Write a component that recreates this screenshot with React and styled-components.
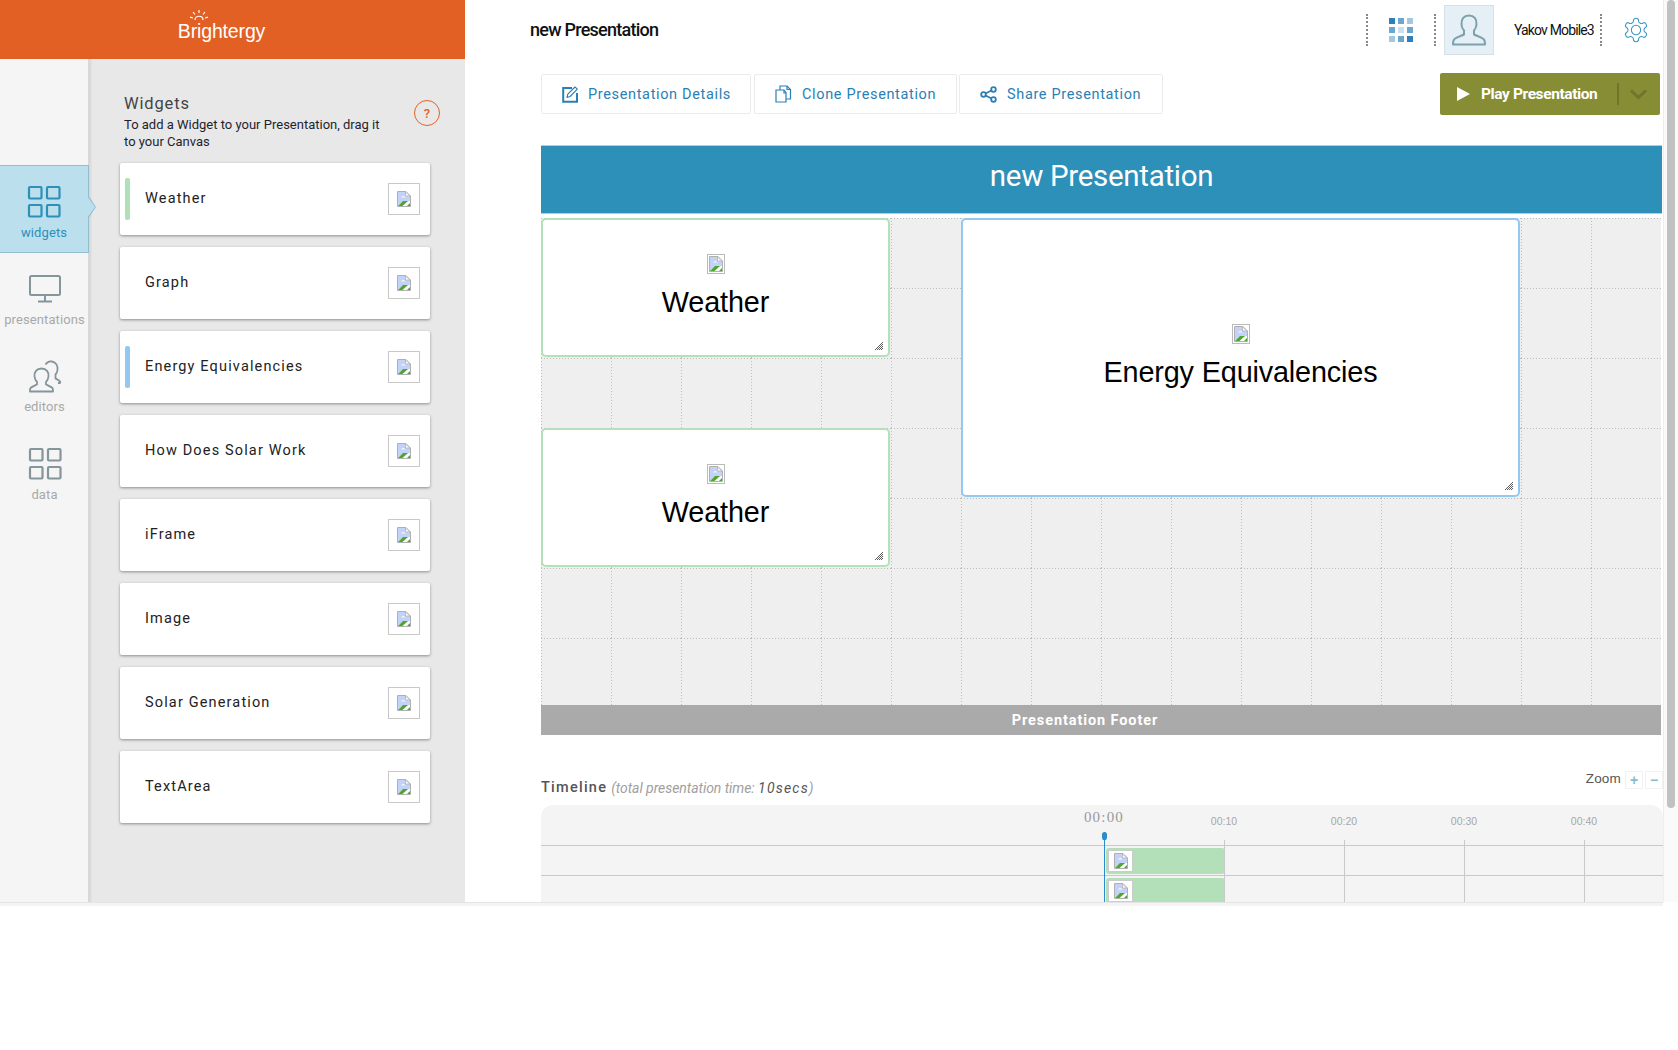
import React from 'react';
import styled, { createGlobalStyle } from 'styled-components';

const Global = createGlobalStyle`
  html, body { margin: 0; padding: 0; background: #fff; }
  * { box-sizing: border-box; }
  body { font-family: Roboto, "Liberation Sans", sans-serif; }
`;

const Page = styled.div`
  display: flex;
  width: 1678px;
  height: 902px;
  overflow: hidden;
`;
const BottomBand = styled.div`
  width: 1663px;
  height: 4px;
  background: #f4f4f4;
  border-top: 1px solid #e4e4e4;
`;

/* Sidebar */
const Sidebar = styled.aside`
  width: 465px;
  flex: none;
  display: flex;
  flex-direction: column;
`;
const Brand = styled.div`
  height: 59px;
  background: #e36025;
  display: flex;
  align-items: center;
  justify-content: center;
  padding-right: 22px;
  padding-top: 3px;
`;
const Logo = styled.span`
  position: relative;
  color: #fff;
  font: 400 19.5px/24px "Liberation Sans", sans-serif;
  letter-spacing: -0.15px;
`;
const LogoSun = styled.svg`
  position: absolute;
  left: 12px;
  top: -9px;
`;
const SideBody = styled.div`
  flex: 1;
  display: flex;
  min-height: 0;
`;
const Rail = styled.nav`
  width: 90px;
  flex: none;
  background: #f5f5f5;
  border-right: 2px solid #d8d8d8;
  box-shadow: 1px 0 2px rgba(0, 0, 0, 0.08);
  padding-top: 106px;
  position: relative;
`;
const RailItem = styled.div`
  position: relative;
  height: 87.6px;
  width: 89px;
  padding-top: 20px;
  display: flex;
  flex-direction: column;
  align-items: center;
  color: ${p => (p.$active ? '#2e90b8' : '#a9a9a9')};
  font-size: 13px;
  background: ${p => (p.$active ? '#bbdfed' : 'transparent')};
  border-top: ${p => (p.$active ? '1px solid #93bed1' : '0')};
  border-bottom: ${p => (p.$active ? '1px solid #93bed1' : '0')};
  border-right: ${p => (p.$active ? '1px solid #93bed1' : '0')};
  ${p => p.$active && `
    &::before {
      content: '';
      position: absolute;
      left: 88px;
      top: 29px;
      width: 8px;
      height: 24px;
      background: #93bed1;
      clip-path: polygon(0 0, 100% 50%, 0 100%);
    }
    &::after {
      content: '';
      position: absolute;
      left: 87px;
      top: 30px;
      width: 8px;
      height: 22px;
      background: #bbdfed;
      clip-path: polygon(0 0, 100% 50%, 0 100%);
    }
  `}
`;
const RailIcon = styled.div`
  height: 32px;
  display: flex;
  align-items: center;
  justify-content: center;
`;
const RailLabel = styled.span`
  margin-top: 6px;
  line-height: 18px;
  letter-spacing: 0.1px;
`;
const Panel = styled.div`
  flex: 1;
  background: #e8e8e8;
  padding: 35px 0 0 30px;
  min-width: 0;
`;
const PanelHead = styled.div`
  position: relative;
  padding-left: 4px;
  height: 69px;
`;
const PanelTitle = styled.h2`
  margin: 0;
  font-size: 16.5px;
  font-weight: 400;
  line-height: 20px;
  letter-spacing: 0.85px;
  color: #444;
`;
const PanelHint = styled.p`
  margin: 2px 0 0;
  width: 256px;
  font-size: 13px;
  line-height: 17px;
  color: #1f1f2e;
`;
const HelpBadge = styled.span`
  position: absolute;
  left: 294px;
  top: 6px;
  width: 26px;
  height: 26px;
  border: 1px solid #e36025;
  border-radius: 50%;
  color: #e36025;
  font-size: 13px;
  font-weight: 500;
  display: flex;
  align-items: center;
  justify-content: center;
`;
const CardList = styled.div`
  display: flex;
  flex-direction: column;
  gap: 12px;
`;
const Card = styled.div`
  position: relative;
  width: 310px;
  height: 72px;
  background: #fff;
  border-radius: 2px;
  box-shadow: 0 1px 3px rgba(0, 0, 0, 0.4);
  display: flex;
  align-items: center;
  padding: 0 10px 2px 25px;
  ${p => p.$stripe && `
    &::before {
      content: '';
      position: absolute;
      left: 5px;
      top: 15px;
      width: 5px;
      height: 42px;
      border-radius: 2px;
      background: ${p.$stripe};
    }
  `}
`;
const CardLabel = styled.span`
  flex: 1;
  font-size: 14.5px;
  letter-spacing: 1.15px;
  color: #222;
`;
const CardThumb = styled.span`
  width: 32px;
  height: 32px;
  margin-bottom: -2px;
  border: 1px solid #c9c9c9;
  display: flex;
  align-items: center;
  justify-content: center;
`;

/* Main */
const Main = styled.main`
  flex: 1;
  min-width: 0;
  padding-left: 76px;
  display: flex;
  flex-direction: column;
`;
const TopBar = styled.header`
  height: 59px;
  flex: none;
  display: flex;
  align-items: center;
  margin-left: -11px;
  padding-right: 13px;
`;
const DocTitle = styled.h1`
  margin: 0;
  flex: 1;
  font-size: 18px;
  font-weight: 500;
  letter-spacing: -0.75px;
  color: #111;
`;
const DotSep = styled.span`
  width: 2px;
  height: 32px;
  border-left: 2px dotted #888;
  margin: ${p => p.$m || '0'};
`;
const AppGrid = styled.div`
  display: grid;
  grid-template-columns: repeat(3, 6px);
  grid-auto-rows: 6px;
  gap: 3px;
  margin: 0 21px;
`;
const AppCell = styled.i`
  display: block;
  background: ${p => p.$c};
`;
const Avatar = styled.div`
  width: 50px;
  height: 50px;
  margin-left: 8px;
  background: #e4f0f6;
  border: 1px solid #d5e1e7;
  display: flex;
  align-items: center;
  justify-content: center;
`;
const UserName = styled.span`
  margin-left: 20px;
  width: 81px;
  font-size: 14px;
  letter-spacing: -0.85px;
  color: #111;
  white-space: nowrap;
`;
const Toolbar = styled.div`
  flex: none;
  display: flex;
  align-items: center;
  height: 42px;
  margin-top: 14px;
  padding-right: 3px;
`;
const ToolButton = styled.button`
  height: 40px;
  width: ${p => p.$w}px;
  margin-right: ${p => p.$mr || 0}px;
  padding: 0 0 0 ${p => p.$pl}px;
  background: #fff;
  border: 1px solid #ebebeb;
  border-radius: 2px;
  display: flex;
  align-items: center;
  color: #2a7fb5;
  font: 400 14.5px Roboto, sans-serif;
  letter-spacing: 0.65px;
  white-space: nowrap;
`;
const ToolIcon = styled.svg`
  flex: none;
  margin-right: ${p => p.$gap || 10}px;
`;
const PlayButton = styled.button`
  margin-left: auto;
  width: 220px;
  height: 42px;
  border: 0;
  border-radius: 2px;
  background: #868d35;
  color: #fff;
  display: flex;
  align-items: center;
  padding: 0 0 0 17px;
  font: 700 15.5px Roboto, sans-serif;
  letter-spacing: -0.4px;
  white-space: nowrap;
`;
const PlayLabel = styled.span`
  width: 136px;
  margin-left: 11px;
  text-align: left;
`;
const PlayDivider = styled.span`
  width: 2px;
  height: 22px;
  background: #6f752b;
  margin-right: 11px;
`;
const BlueHeader = styled.div`
  flex: none;
  height: 69px;
  margin-top: 30px;
  margin-right: 1px;
  padding-bottom: 7px;
  background: #2d90b8;
  border-top: 1px solid #a6d2e3;
  border-bottom: 1px solid #a6d2e3;
  color: #fff;
  font-size: 29.5px;
  letter-spacing: -0.3px;
  display: flex;
  align-items: center;
  justify-content: center;
`;
const Canvas = styled.div`
  position: relative;
  flex: none;
  width: 1120px;
  height: 487px;
  margin-top: 4px;
  background: #efefef;
  overflow: hidden;
  display: grid;
  grid-template-columns: repeat(16, 70px);
  grid-auto-rows: 70px;
`;
const Cell = styled.div`
  background-image:
    linear-gradient(to right, #bdbdbd 1px, transparent 1px),
    linear-gradient(to bottom, #bdbdbd 1px, transparent 1px);
  background-size: 3px 1px, 1px 3px;
  background-repeat: repeat-x, repeat-y;
  background-position: 0 0, 0 0;
`;
const CanvasWidget = styled.div`
  position: absolute;
  left: ${p => p.$x}px;
  top: ${p => p.$y}px;
  width: ${p => p.$w}px;
  height: ${p => p.$h}px;
  background: #fff;
  border: 2px solid ${p => p.$c};
  border-radius: 5px;
  display: flex;
  flex-direction: column;
  align-items: center;
  justify-content: center;
  gap: 8px;
`;
const WidgetThumb = styled.span`
  width: 18px;
  height: 20px;
  border: 1px solid #bbb;
  display: flex;
  align-items: center;
  justify-content: center;
`;
const WidgetName = styled.span`
  font: 400 28.8px/40px "Liberation Sans", sans-serif;
  letter-spacing: -0.15px;
  color: #000;
`;
const ResizeGrip = styled.svg`
  position: absolute;
  right: 5px;
  bottom: 5px;
`;
const FooterBar = styled.div`
  flex: none;
  width: 1120px;
  height: 30px;
  background: #aaa;
  color: #fff;
  font-size: 14.5px;
  font-weight: 700;
  letter-spacing: 0.9px;
  display: flex;
  align-items: center;
  justify-content: center;
  padding-right: 32px;
`;
const TimelineHead = styled.div`
  flex: none;
  height: 34px;
  margin-top: 36px;
  position: relative;
  display: flex;
  align-items: flex-end;
  padding-bottom: 8px;
`;
const TimelineTitle = styled.span`
  font-size: 14.5px;
  font-weight: 500;
  letter-spacing: 1.25px;
  color: #555;
  line-height: 18px;
`;
const TimelineNote = styled.em`
  margin-left: 4px;
  font-size: 14px;
  line-height: 18px;
  letter-spacing: -0.05px;
  color: #a0a0a0;
`;
const NoteValue = styled.span`
  color: #555;
  letter-spacing: 1.2px;
`;
const ZoomBox = styled.div`
  position: absolute;
  right: 0;
  top: 0;
  display: flex;
  align-items: flex-start;
  gap: 2px;
`;
const ZoomLabel = styled.span`
  font: 400 13.5px/16px "Liberation Sans", sans-serif;
  color: #555;
  margin-right: 2px;
  letter-spacing: 0.2px;
`;
const ZoomBtn = styled.span`
  width: 18px;
  height: 18px;
  border: 1px solid #f2f2f2;
  color: #83bcd2;
  font: 700 14px/17px "Liberation Sans", sans-serif;
  text-align: center;
`;
const Timeline = styled.div`
  position: relative;
  flex: 1;
  min-height: 0;
  background: #f4f4f4;
  border-radius: 12px 12px 0 0;
  overflow: hidden;
`;
const Ruler = styled.div`
  height: 40px;
`;
const Track = styled.div`
  position: relative;
  height: 30px;
  border-top: 1px solid #c9c9c9;
`;
const Clip = styled.div`
  position: absolute;
  left: 565px;
  top: 2px;
  width: 119px;
  height: 26px;
  background: #b3e0b8;
  border-radius: 3px;
  padding: 2px 0 0 2px;
`;
const ClipThumb = styled.span`
  display: flex;
  align-items: center;
  justify-content: center;
  width: 25px;
  height: 22px;
  background: #fff;
  border: 1px solid #ccc;
`;
const Tick = styled.div`
  position: absolute;
  left: ${p => p.$x}px;
  top: 35px;
  bottom: 0;
  width: 1px;
  background: #c9c9c9;
`;
const TickLabel = styled.span`
  position: absolute;
  left: ${p => p.$x}px;
  top: 10px;
  width: 40px;
  margin-left: -20px;
  text-align: center;
  font: 400 10.5px/12px "Liberation Sans", sans-serif;
  color: #a8a8a8;
`;
const NowLabel = styled.span`
  position: absolute;
  left: 563px;
  top: 3px;
  width: 60px;
  margin-left: -30px;
  text-align: center;
  font: 400 15px/18px "Liberation Serif", serif;
  letter-spacing: 1.2px;
  color: #999;
`;
const Playhead = styled.div`
  position: absolute;
  left: 563px;
  top: 27px;
  bottom: 0;
  width: 1px;
  background: #2a8ccb;
  &::before {
    content: '';
    position: absolute;
    left: -2px;
    top: 0;
    width: 5px;
    height: 8px;
    background: #2a8ccb;
    border-radius: 3px 3px 50% 50%;
  }
`;
const Scrollbar = styled.div`
  width: 15px;
  flex: none;
  background: #fafafa;
  border-left: 1px solid #ededed;
  padding-left: 3px;
`;
const ScrollThumb = styled.div`
  width: 8px;
  height: 808px;
  border-radius: 4px;
  background: #c1c1c1;
`;

const BrokenImage = ({ size = 16 }) => (
  <svg width={size} height={size} viewBox="0 0 16 16">
    <path d="M1.500.5H10L14.500 5v10.500h-13z" fill="#fff" stroke="#b0b0b0" />
    <path d="M2 1h7.500v4H14v5L9 11H6l-4 4z" fill="#c3d3f7" />
    <path d="M5 6.500c1-2 3.500-2 4.500 0z" fill="#f0f4fe" />
    <path d="M9.500 1v4H14z" fill="#fff" stroke="#b0b0b0" strokeWidth=".8" />
    <path d="M2 15l5-5h5l-5.500 5z" fill="#4ea72c" />
    <path d="M11 15l3-3v3z" fill="#4ea72c" />
  </svg>
);

const Squares = ({ c }) => (
  <svg width="34" height="34" viewBox="0 0 34 34" fill="none" stroke={c} strokeWidth="2.2">
    <rect x="2" y="2" width="12.500" height="11.500" rx="1" />
    <rect x="20" y="2" width="12.500" height="11.500" rx="1" />
    <rect x="2" y="20" width="12.500" height="11.500" rx="1" />
    <rect x="20" y="20" width="12.500" height="11.500" rx="1" />
  </svg>
);
const Monitor = () => (
  <svg width="34" height="30" viewBox="0 0 34 30" fill="none" stroke="#84959b" strokeWidth="2">
    <rect x="2" y="2" width="30" height="19" rx="1.500" />
    <path d="M17 21v6M10 27.500h14" />
  </svg>
);
const People = () => (
  <svg width="34" height="34" viewBox="0 0 34 34" fill="none" stroke="#84959b" strokeWidth="1.800" strokeLinejoin="round">
    <path d="M13.500 9.500c5 0 7.500 3.500 7 8-.3 2.500-1.500 4.500-2.500 5.500v2.500c2 1 5 2 6.500 3.500.7.800.5 2.500.5 3.500H2c0-1-.2-2.700.5-3.500 1.500-1.500 4.500-2.500 6.500-3.500V23c-1-1-2.200-3-2.500-5.500-.5-4.500 2-8 7-8z" />
    <path d="M17.500 5.500c1.500-2.500 4-3.500 6.500-3 4 .8 6 4.500 5.500 8.500-.2 2-1 3.500-2 4.500v4c1.500 1 3.500 1.500 4.500 3 .4.600.4 1.500-.5 1.500h-1.500" />
  </svg>
);
const EditIcon = () => (
  <ToolIcon width="16" height="18" viewBox="0 0 16 18" fill="none" stroke="#2a7fb5">
    <path d="M10 3H1.200v13.800H15V8" strokeWidth="2" />
    <path d="M5 12.500l.8-3.300L13 2l2.300 2.200-7.200 7.300z" strokeWidth="1.100" strokeLinejoin="round" />
  </ToolIcon>
);
const CloneIcon = () => (
  <ToolIcon width="17" height="18" viewBox="0 0 17 18" fill="none" stroke="#2a7fb5" strokeWidth="1.200">
    <path d="M1 5h8l2 2.500V17H1z" />
    <path d="M5 5V1h7l3.500 3.500V14H11" />
    <path d="M9 5v3h2M12 1v3.500h3.500" />
  </ToolIcon>
);
const ShareIcon = () => (
  <ToolIcon width="17" height="17" viewBox="0 0 17 17" fill="none" stroke="#2a7fb5" strokeWidth="1.800">
    <circle cx="3.500" cy="8.500" r="2.300" />
    <circle cx="13.500" cy="3.500" r="2.300" />
    <circle cx="13.500" cy="13.500" r="2.300" />
    <path d="M5.500 7.500l6-3M5.500 9.500l6 3" />
  </ToolIcon>
);
const PersonIcon = () => (
  <svg width="34" height="32" viewBox="0 0 34 32" fill="none" stroke="#7fa0ae" strokeWidth="2" strokeLinejoin="round">
    <path d="M17 1.500c5 0 8 3.500 7.500 9-.3 3-1.500 5-2.500 6v4c3 1.500 7 2.500 9.500 4.500 1.200 1 1.500 3 1.500 5.500H1c0-2.500.3-4.500 1.500-5.500C5 23 9 22 12 20.500v-4c-1-1-2.200-3-2.500-6-.5-5.500 2.500-9 7.500-9z" />
  </svg>
);
const GearIcon = () => (
  <svg width="28" height="28" viewBox="0 0 24 24" fill="none" stroke="#3b97c0" strokeWidth=".9" strokeLinecap="round" strokeLinejoin="round">
    <path d="M12.220 2h-.440a2 2 0 0 0-2 2v.180a2 2 0 0 1-1 1.730l-.430.250a2 2 0 0 1-2 0l-.150-.080a2 2 0 0 0-2.730.730l-.220.380a2 2 0 0 0 .730 2.730l.150.100a2 2 0 0 1 1 1.720v.510a2 2 0 0 1-1 1.740l-.150.090a2 2 0 0 0-.730 2.730l.220.380a2 2 0 0 0 2.730.730l.150-.080a2 2 0 0 1 2 0l.430.250a2 2 0 0 1 1 1.730V20a2 2 0 0 0 2 2h.440a2 2 0 0 0 2-2v-.180a2 2 0 0 1 1-1.730l.430-.250a2 2 0 0 1 2 0l.150.080a2 2 0 0 0 2.730-.730l.220-.390a2 2 0 0 0-.730-2.730l-.150-.080a2 2 0 0 1-1-1.740v-.500a2 2 0 0 1 1-1.740l.150-.090a2 2 0 0 0 .730-2.730l-.220-.380a2 2 0 0 0-2.730-.730l-.150.080a2 2 0 0 1-2 0l-.430-.250a2 2 0 0 1-1-1.730V4a2 2 0 0 0-2-2z" />
    <circle cx="12" cy="12" r="4" />
  </svg>
);
const Grip = () => (
  <ResizeGrip width="8" height="8" viewBox="0 0 8 8" stroke="#333" strokeWidth=".8">
    <path d="M0 8L8 0M2 8l6-6M4 8l4-4M6 8l2-2" />
  </ResizeGrip>
);

const widgets = [
  { name: 'Weather', stripe: '#b0e0b8' },
  { name: 'Graph' },
  { name: 'Energy Equivalencies', stripe: '#93c9f0' },
  { name: 'How Does Solar Work' },
  { name: 'iFrame' },
  { name: 'Image' },
  { name: 'Solar Generation' },
  { name: 'TextArea' },
];
const appColors = ['#2b80b9', '#6aa6d0', '#a5c8df', '#6aa6d0', '#cfe0ea', '#6aa6d0', '#a5c8df', '#6aa6d0', '#2b80b9'];
const ticks = [683, 803, 923, 1043];

export default function App() {
  return (
    <>
      <Global />
      <Page>
        <Sidebar>
          <Brand>
            <Logo>
              <LogoSun width="18" height="10" viewBox="0 0 18 10" fill="none" stroke="#fff" strokeWidth="1.200">
                <path d="M5 10c0-5 8-5 8 0M9 0v3M3 2l2 2.500M15 2l-2 2.500M0 7l3 1M18 7l-3 1" />
              </LogoSun>
              Brightergy
            </Logo>
          </Brand>
          <SideBody>
            <Rail>
              <RailItem $active>
                <RailIcon><Squares c="#2e90b8" /></RailIcon>
                <RailLabel>widgets</RailLabel>
              </RailItem>
              <RailItem>
                <RailIcon><Monitor /></RailIcon>
                <RailLabel>presentations</RailLabel>
              </RailItem>
              <RailItem>
                <RailIcon><People /></RailIcon>
                <RailLabel>editors</RailLabel>
              </RailItem>
              <RailItem>
                <RailIcon><Squares c="#84959b" /></RailIcon>
                <RailLabel>data</RailLabel>
              </RailItem>
            </Rail>
            <Panel>
              <PanelHead>
                <PanelTitle>Widgets</PanelTitle>
                <PanelHint>To add a Widget to your Presentation, drag it to your Canvas</PanelHint>
                <HelpBadge>?</HelpBadge>
              </PanelHead>
              <CardList>
                {widgets.map(w => (
                  <Card key={w.name} $stripe={w.stripe}>
                    <CardLabel>{w.name}</CardLabel>
                    <CardThumb><BrokenImage /></CardThumb>
                  </Card>
                ))}
              </CardList>
            </Panel>
          </SideBody>
        </Sidebar>
        <Main>
          <TopBar>
            <DocTitle>new Presentation</DocTitle>
            <DotSep />
            <AppGrid>
              {appColors.map((c, i) => <AppCell key={i} $c={c} />)}
            </AppGrid>
            <DotSep />
            <Avatar><PersonIcon /></Avatar>
            <UserName>Yakov Mobile3</UserName>
            <DotSep $m="0 20px 0 5px" />
            <GearIcon />
          </TopBar>
          <Toolbar>
            <ToolButton $w={210} $mr={3} $pl={20}><EditIcon />Presentation Details</ToolButton>
            <ToolButton $w={203} $mr={2} $pl={20}><CloneIcon />Clone Presentation</ToolButton>
            <ToolButton $w={204} $pl={20}><ShareIcon />Share Presentation</ToolButton>
            <PlayButton>
              <svg width="13" height="14" viewBox="0 0 13 14"><path d="M0 0l13 7-13 7z" fill="#fff" /></svg>
              <PlayLabel>Play Presentation</PlayLabel>
              <PlayDivider />
              <svg width="17" height="11" viewBox="0 0 17 11" fill="none" stroke="#6f752b" strokeWidth="3"><path d="M1 1.500l7.500 7 7.500-7" /></svg>
            </PlayButton>
          </Toolbar>
          <BlueHeader>new Presentation</BlueHeader>
          <Canvas>
            {Array.from({ length: 112 }, (_, i) => <Cell key={i} />)}
            <CanvasWidget $x={0} $y={0} $w={349} $h={139} $c="#b4e1ba">
              <WidgetThumb><BrokenImage /></WidgetThumb>
              <WidgetName>Weather</WidgetName>
              <Grip />
            </CanvasWidget>
            <CanvasWidget $x={0} $y={210} $w={349} $h={139} $c="#b4e1ba">
              <WidgetThumb><BrokenImage /></WidgetThumb>
              <WidgetName>Weather</WidgetName>
              <Grip />
            </CanvasWidget>
            <CanvasWidget $x={420} $y={0} $w={559} $h={279} $c="#93c9f0">
              <WidgetThumb><BrokenImage /></WidgetThumb>
              <WidgetName>Energy Equivalencies</WidgetName>
              <Grip />
            </CanvasWidget>
          </Canvas>
          <FooterBar>Presentation Footer</FooterBar>
          <TimelineHead>
            <TimelineTitle>Timeline</TimelineTitle>
            <TimelineNote>(total presentation time: <NoteValue>10secs</NoteValue>)</TimelineNote>
            <ZoomBox>
              <ZoomLabel>Zoom</ZoomLabel>
              <ZoomBtn>+</ZoomBtn>
              <ZoomBtn>−</ZoomBtn>
            </ZoomBox>
          </TimelineHead>
          <Timeline>
            <Ruler />
            <Track><Clip><ClipThumb><BrokenImage /></ClipThumb></Clip></Track>
            <Track><Clip><ClipThumb><BrokenImage /></ClipThumb></Clip></Track>
            <NowLabel>00:00</NowLabel>
            <Playhead />
            {ticks.map((x, i) => (
              <React.Fragment key={x}>
                <TickLabel $x={x}>{`00:${(i + 1) * 10}`}</TickLabel>
                <Tick $x={x} />
              </React.Fragment>
            ))}
          </Timeline>
        </Main>
        <Scrollbar><ScrollThumb /></Scrollbar>
      </Page>
      <BottomBand />
    </>
  );
}
